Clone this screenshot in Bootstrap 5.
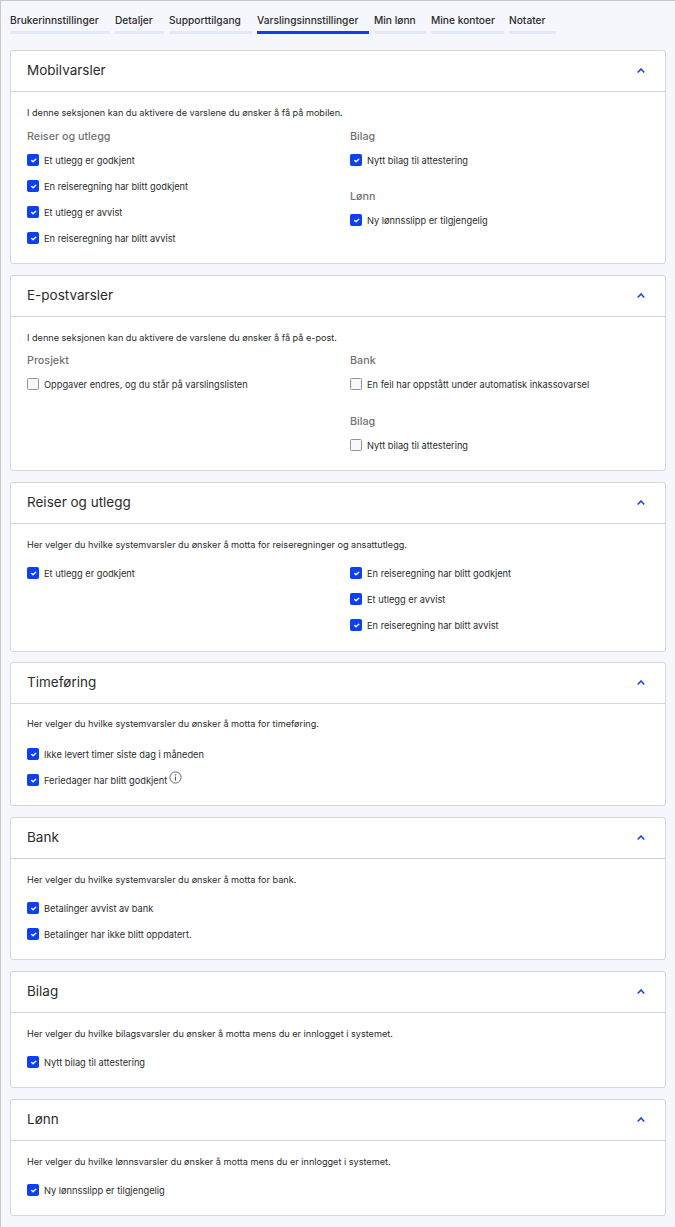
<!DOCTYPE html>
<html lang="no"><head><meta charset="utf-8"><title>Varslingsinnstillinger</title>
<link rel="stylesheet" href="https://cdn.jsdelivr.net/npm/bootstrap@5.3.0/dist/css/bootstrap.min.css">
<style>
html,body{height:100%}
body{background:#f5f7fc;font-family:Inter,"Liberation Sans",sans-serif;font-size:9.12px;color:#2b2b2b;border-top:1px solid #c8c8c8;border-left:1px solid #c8c8c8;padding:0 9px;line-height:14px}
.tabbar{gap:5px;height:33px;margin-bottom:16px}
.tabbar .tabitem{display:block;height:33px;padding:12px 0 0;border-bottom:3px solid #e3e9f8;color:#2b2b2b;text-decoration:none;font-weight:500;font-size:10.2px;white-space:nowrap}
.tabbar .tabitem.on{border-bottom-color:#0d40f0}
.panel{border:1px solid #d3d5d9;border-radius:3px;margin-bottom:11px;--bs-card-bg:#fff}
.panel-head{height:41px;border-bottom:1px solid #d3d5d9;padding:0 20px 3px 16px;font-size:13.5px;color:#2b2b2b}
.panel-body{padding:14px 16px 0}
.lead-text{margin:0 0 9px;height:14px}
.lead-short{margin-bottom:8px}
.sub{font-size:10.75px;font-weight:500;color:#737373;margin:0 0 3px;height:16px;line-height:16px}
.sub-gap{margin-top:15px}
.sub-gap-wide{margin-top:16px}
.chk{display:flex;align-items:center;min-height:26px;margin:0;padding:0;gap:5px;font-size:9.25px}
.chk .form-check-input{width:12px;height:12px;margin:0 0 2px;border-radius:1.5px;border:1px solid #8e93a3;flex:none;background-color:#f7f8fb;background-size:9px}
.chk .form-check-input:checked{background-color:#0d40f0;border-color:#0d40f0}
.chev{width:8px;height:5px;margin-top:2px}
.tip{width:13px;height:13px;margin-left:2px;position:relative;top:-4px}
.w1{width:100px}.w2{width:49px}.w3{width:83px}.w4{width:112px}.w5{width:52px}.w6{width:73px}.w7{width:47px}
.h1a{height:171px}.h2a{height:153px}.h3a{height:127px}.h4a{height:101px;padding-top:13px}.h4a .lead-text{margin-bottom:11px}.h5a{height:100px}.h6a{height:74px}
.panel-tight{margin-bottom:10px}
</style></head><body>
<nav class="d-flex tabbar">
<a class="tabitem w1">Brukerinnstillinger</a>
<a class="tabitem w2">Detaljer</a>
<a class="tabitem w3">Supporttilgang</a>
<a class="tabitem w4 on">Varslingsinnstillinger</a>
<a class="tabitem w5">Min lønn</a>
<a class="tabitem w6">Mine kontoer</a>
<a class="tabitem w7">Notater</a>
</nav>

<section class="card panel">
<div class="panel-head d-flex align-items-center justify-content-between"><span>Mobilvarsler</span><svg class="chev" viewBox="0 0 8 5"><path d="M.7 4.4L4 1l3.3 3.4" fill="none" stroke="#0d40f0" stroke-width="1.5"/></svg></div>
<div class="panel-body h1a"><p class="lead-text">I denne seksjonen kan du aktivere de varslene du ønsker å få på mobilen.</p>
<div class="row g-0 gx-4"><div class="col-6">
<p class="sub">Reiser og utlegg</p>
<label class="chk"><input class="form-check-input" type="checkbox" checked>Et utlegg er godkjent</label>
<label class="chk"><input class="form-check-input" type="checkbox" checked>En reiseregning har blitt godkjent</label>
<label class="chk"><input class="form-check-input" type="checkbox" checked>Et utlegg er avvist</label>
<label class="chk"><input class="form-check-input" type="checkbox" checked>En reiseregning har blitt avvist</label>
</div><div class="col-6">
<p class="sub">Bilag</p>
<label class="chk"><input class="form-check-input" type="checkbox" checked>Nytt bilag til attestering</label>
<p class="sub sub-gap">Lønn</p>
<label class="chk"><input class="form-check-input" type="checkbox" checked>Ny lønnsslipp er tilgjengelig</label>
</div></div></div>
</section>

<section class="card panel">
<div class="panel-head d-flex align-items-center justify-content-between"><span>E-postvarsler</span><svg class="chev" viewBox="0 0 8 5"><path d="M.7 4.4L4 1l3.3 3.4" fill="none" stroke="#0d40f0" stroke-width="1.5"/></svg></div>
<div class="panel-body h2a"><p class="lead-text lead-short">I denne seksjonen kan du aktivere de varslene du ønsker å få på e-post.</p>
<div class="row g-0 gx-4"><div class="col-6">
<p class="sub">Prosjekt</p>
<label class="chk"><input class="form-check-input" type="checkbox">Oppgaver endres, og du står på varslingslisten</label>
</div><div class="col-6">
<p class="sub">Bank</p>
<label class="chk"><input class="form-check-input" type="checkbox">En feil har oppstått under automatisk inkassovarsel</label>
<p class="sub sub-gap-wide">Bilag</p>
<label class="chk"><input class="form-check-input" type="checkbox">Nytt bilag til attestering</label>
</div></div></div>
</section>

<section class="card panel panel-tight">
<div class="panel-head d-flex align-items-center justify-content-between"><span>Reiser og utlegg</span><svg class="chev" viewBox="0 0 8 5"><path d="M.7 4.4L4 1l3.3 3.4" fill="none" stroke="#0d40f0" stroke-width="1.5"/></svg></div>
<div class="panel-body h3a"><p class="lead-text">Her velger du hvilke systemvarsler du ønsker å motta for reiseregninger og ansattutlegg.</p>
<div class="row g-0 gx-4"><div class="col-6">
<label class="chk"><input class="form-check-input" type="checkbox" checked>Et utlegg er godkjent</label>
</div><div class="col-6">
<label class="chk"><input class="form-check-input" type="checkbox" checked>En reiseregning har blitt godkjent</label>
<label class="chk"><input class="form-check-input" type="checkbox" checked>Et utlegg er avvist</label>
<label class="chk"><input class="form-check-input" type="checkbox" checked>En reiseregning har blitt avvist</label>
</div></div></div>
</section>

<section class="card panel">
<div class="panel-head d-flex align-items-center justify-content-between"><span>Timeføring</span><svg class="chev" viewBox="0 0 8 5"><path d="M.7 4.4L4 1l3.3 3.4" fill="none" stroke="#0d40f0" stroke-width="1.5"/></svg></div>
<div class="panel-body h4a"><p class="lead-text">Her velger du hvilke systemvarsler du ønsker å motta for timeføring.</p>
<label class="chk"><input class="form-check-input" type="checkbox" checked>Ikke levert timer siste dag i måneden</label>
<label class="chk"><input class="form-check-input" type="checkbox" checked><span>Feriedager har blitt godkjent<svg class="tip" viewBox="0 0 13 13"><circle cx="6.5" cy="6.5" r="5.6" fill="none" stroke="#555" stroke-width=".9"/><path d="M6.5 5.6v4" stroke="#555" stroke-width="1"/><circle cx="6.5" cy="3.9" r=".7" fill="#555"/></svg></span></label>
</div>
</section>

<section class="card panel">
<div class="panel-head d-flex align-items-center justify-content-between"><span>Bank</span><svg class="chev" viewBox="0 0 8 5"><path d="M.7 4.4L4 1l3.3 3.4" fill="none" stroke="#0d40f0" stroke-width="1.5"/></svg></div>
<div class="panel-body h5a"><p class="lead-text">Her velger du hvilke systemvarsler du ønsker å motta for bank.</p>
<label class="chk"><input class="form-check-input" type="checkbox" checked>Betalinger avvist av bank</label>
<label class="chk"><input class="form-check-input" type="checkbox" checked>Betalinger har ikke blitt oppdatert.</label>
</div>
</section>

<section class="card panel">
<div class="panel-head d-flex align-items-center justify-content-between"><span>Bilag</span><svg class="chev" viewBox="0 0 8 5"><path d="M.7 4.4L4 1l3.3 3.4" fill="none" stroke="#0d40f0" stroke-width="1.5"/></svg></div>
<div class="panel-body h6a"><p class="lead-text">Her velger du hvilke bilagsvarsler du ønsker å motta mens du er innlogget i systemet.</p>
<label class="chk"><input class="form-check-input" type="checkbox" checked>Nytt bilag til attestering</label>
</div>
</section>

<section class="card panel">
<div class="panel-head d-flex align-items-center justify-content-between"><span>Lønn</span><svg class="chev" viewBox="0 0 8 5"><path d="M.7 4.4L4 1l3.3 3.4" fill="none" stroke="#0d40f0" stroke-width="1.5"/></svg></div>
<div class="panel-body h6a"><p class="lead-text">Her velger du hvilke lønnsvarsler du ønsker å motta mens du er innlogget i systemet.</p>
<label class="chk"><input class="form-check-input" type="checkbox" checked>Ny lønnsslipp er tilgjengelig</label>
</div>
</section>
<script src="https://cdn.jsdelivr.net/npm/bootstrap@5.3.0/dist/js/bootstrap.bundle.min.js"></script>
</body></html>
